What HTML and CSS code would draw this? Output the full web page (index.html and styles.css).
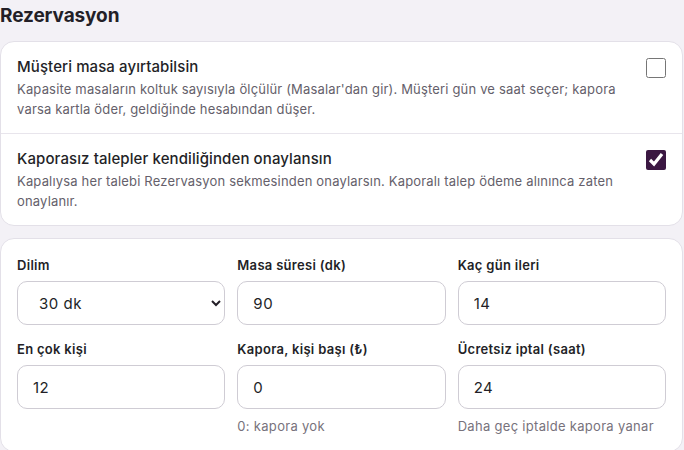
FILE: index.html
```html
<!DOCTYPE html>
<html lang="tr">
<head>
  <meta charset="UTF-8">
  <title>Rezervasyon</title>
  <meta name="viewport" content="width=device-width, initial-scale=1.0">
  <link rel="stylesheet" href="styles.css">
</head>
<body>
  <h2 class="baslik">Rezervasyon</h2>

  <section class="kart">
    <div class="secenek">
      <div class="secenek-metin">
        <div class="secenek-baslik">Müşteri masa ayırtabilsin</div>
        <p>Kapasite masaların koltuk sayısıyla ölçülür (Masalar'dan gir). Müşteri gün ve saat seçer; kapora varsa kartla öder, geldiğinde hesabından düşer.</p>
      </div>
      <input type="checkbox" class="kutu">
    </div>
    <div class="secenek">
      <div class="secenek-metin">
        <div class="secenek-baslik">Kaporasız talepler kendiliğinden onaylansın</div>
        <p>Kapalıysa her talebi Rezervasyon sekmesinden onaylarsın. Kaporalı talep ödeme alınınca zaten onaylanır.</p>
      </div>
      <input type="checkbox" class="kutu" checked>
    </div>
  </section>

  <section class="kart ayarlar">
    <div class="alan">
      <label for="dilim">Dilim</label>
      <select id="dilim">
        <option>15 dk</option>
        <option selected>30 dk</option>
        <option>60 dk</option>
      </select>
    </div>
    <div class="alan">
      <label for="sure">Masa süresi (dk)</label>
      <input type="text" id="sure" value="90">
    </div>
    <div class="alan">
      <label for="gun">Kaç gün ileri</label>
      <input type="text" id="gun" value="14">
    </div>
    <div class="alan">
      <label for="kisi">En çok kişi</label>
      <input type="text" id="kisi" value="12">
    </div>
    <div class="alan">
      <label for="kapora">Kapora, kişi başı (₺)</label>
      <input type="text" id="kapora" value="0">
      <small>0: kapora yok</small>
    </div>
    <div class="alan">
      <label for="iptal">Ücretsiz iptal (saat)</label>
      <input type="text" id="iptal" value="24">
      <small>Daha geç iptalde kapora yanar</small>
    </div>
  </section>
</body>
</html>
```

FILE: styles.css
```css
body {
  font-family: 'Inter', 'Noto Sans', sans-serif;
  background: #f3f1f6;
  margin: 0;
  padding: 0;
  color: #231f27;
}
.baslik {
  margin: 0;
  padding: 4px 0 0 0;
  height: 37px;
  font-size: 19px;
  font-weight: 700;
  letter-spacing: -0.1px;
}
.kart {
  background: white;
  border: 1px solid #e3e0e8;
  border-radius: 14px;
  margin: 0 1px 12px 0;
}
.secenek {
  display: flex;
  align-items: flex-start;
  gap: 20px;
  padding: 15px 16px 14px 16px;
  border-bottom: 1px solid #e8e5ec;
}
.secenek:last-child {
  border-bottom: none;
}
.secenek-metin {
  flex: 1;
}
.secenek-baslik {
  font-size: 15px;
  font-weight: 500;
  line-height: 20px;
  letter-spacing: 0.1px;
}
.secenek p {
  margin: 2px 0 0 0;
  font-size: 13px;
  line-height: 20px;
  letter-spacing: 0.17px;
  color: #655f6b;
}
.kutu {
  width: 20px;
  height: 20px;
  margin: 1px 0 0 0;
  accent-color: #3b1742;
}
.ayarlar {
  display: grid;
  grid-template-columns: 1fr 1fr 1fr;
  column-gap: 12px;
  row-gap: 15px;
  padding: 17px 16px 16px 16px;
}
.alan label {
  display: block;
  font-size: 13px;
  font-weight: 600;
  line-height: 18px;
  letter-spacing: 0.3px;
  margin-bottom: 7px;
}
.alan input, .alan select {
  box-sizing: border-box;
  width: 100%;
  height: 44px;
  padding: 0 15px;
  border: 1px solid #cfccd4;
  border-radius: 10px;
  background: white;
  font-family: inherit;
  font-size: 15px;
  letter-spacing: 0.5px;
  color: #231f27;
}
.alan select {
  padding-left: 17px;
}
.alan small {
  display: block;
  margin-top: 8px;
  font-size: 13px;
  line-height: 18px;
  letter-spacing: 0.3px;
  color: #77727c;
}
```
